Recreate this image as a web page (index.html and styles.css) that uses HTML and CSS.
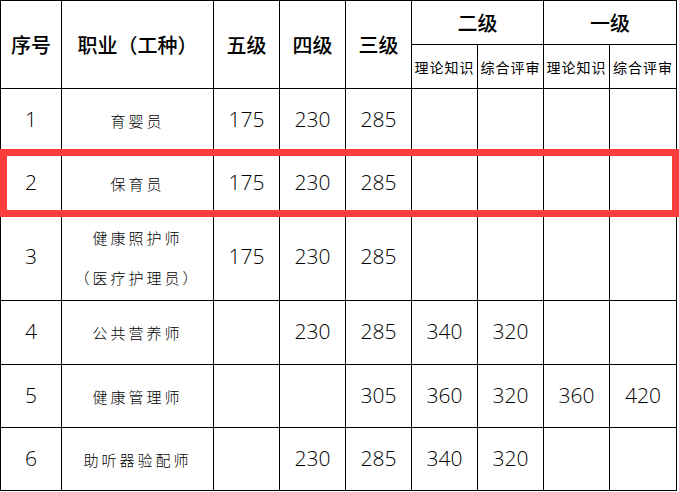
FILE: index.html
```html
<!DOCTYPE html>
<html lang="zh-CN">
<head>
<meta charset="utf-8">
<link rel="stylesheet" href="styles.css">
</head>
<body>
<div class="wrap">
<table class="fee">
<colgroup>
<col class="c-no"><col class="c-job"><col class="c-n"><col class="c-n"><col class="c-n"><col class="c-n"><col class="c-n"><col class="c-n"><col class="c-last">
</colgroup>
<thead>
<tr class="h1">
<th rowspan="2">序号</th>
<th rowspan="2" class="job-h">职业（工种）</th>
<th rowspan="2">五级</th>
<th rowspan="2">四级</th>
<th rowspan="2">三级</th>
<th colspan="2">二级</th>
<th colspan="2">一级</th>
</tr>
<tr class="h2">
<th class="sub">理论知识</th>
<th class="sub">综合评审</th>
<th class="sub">理论知识</th>
<th class="sub">综合评审</th>
</tr>
</thead>
<tbody>
<tr class="r63"><td class="num">1</td><td class="job">育婴员</td><td class="num">175</td><td class="num">230</td><td class="num">285</td><td></td><td></td><td></td><td></td></tr>
<tr class="r63"><td class="num">2</td><td class="job">保育员</td><td class="num">175</td><td class="num">230</td><td class="num">285</td><td></td><td></td><td></td><td></td></tr>
<tr class="r86"><td class="num">3</td><td class="job two">健康照护师<br>（医疗护理员）</td><td class="num">175</td><td class="num">230</td><td class="num">285</td><td></td><td></td><td></td><td></td></tr>
<tr class="r64"><td class="num">4</td><td class="job">公共营养师</td><td></td><td class="num">230</td><td class="num">285</td><td class="num">340</td><td class="num">320</td><td></td><td></td></tr>
<tr class="r63"><td class="num">5</td><td class="job">健康管理师</td><td></td><td></td><td class="num">305</td><td class="num">360</td><td class="num">320</td><td class="num">360</td><td class="num">420</td></tr>
<tr class="r63"><td class="num">6</td><td class="job">助听器验配师</td><td></td><td class="num">230</td><td class="num">285</td><td class="num">340</td><td class="num">320</td><td></td><td></td></tr>
</tbody>
</table>
<div class="highlight"></div>
</div>
</body>
</html>
```
FILE: styles.css
```css
html, body {
  margin: 0;
  padding: 0;
  background: #ffffff;
}
.wrap {
  position: relative;
  width: 679px;
  height: 492px;
}
.fee {
  border-collapse: collapse;
  table-layout: fixed;
  width: 677px;
  color: #000;
  font-family: "Noto Sans CJK SC", "Noto Sans", sans-serif;
}
.c-no { width: 61px; }
.c-job { width: 152px; }
.c-n { width: 66px; }
.c-last { width: 67px; }
.fee th, .fee td {
  border: 1px solid #000;
  padding: 0;
  text-align: center;
  vertical-align: middle;
}
.fee th {
  font-size: 20px;
  font-weight: 500;
  line-height: 24px;
}
.fee th.sub {
  font-size: 14px;
  font-weight: 400;
  letter-spacing: 1px;
  white-space: nowrap;
  overflow: hidden;
}
.h1 { height: 44px; }
.h2 { height: 44px; }
.r63 { height: 63px; }
.r64 { height: 64px; }
.r86 { height: 86px; }
.fee td.num {
  font-family: "Open Sans", "Noto Sans", sans-serif;
  font-size: 21px;
  font-weight: 300;
  padding-bottom: 3px;
}
.job {
  font-size: 15px;
  font-weight: 300;
  letter-spacing: 3px;
}
.job.two {
  line-height: 40px;
}
.highlight {
  position: absolute;
  left: 0;
  top: 149px;
  width: 679px;
  height: 68px;
  box-sizing: border-box;
  border: 7px solid #fd3c3c;
}
```
